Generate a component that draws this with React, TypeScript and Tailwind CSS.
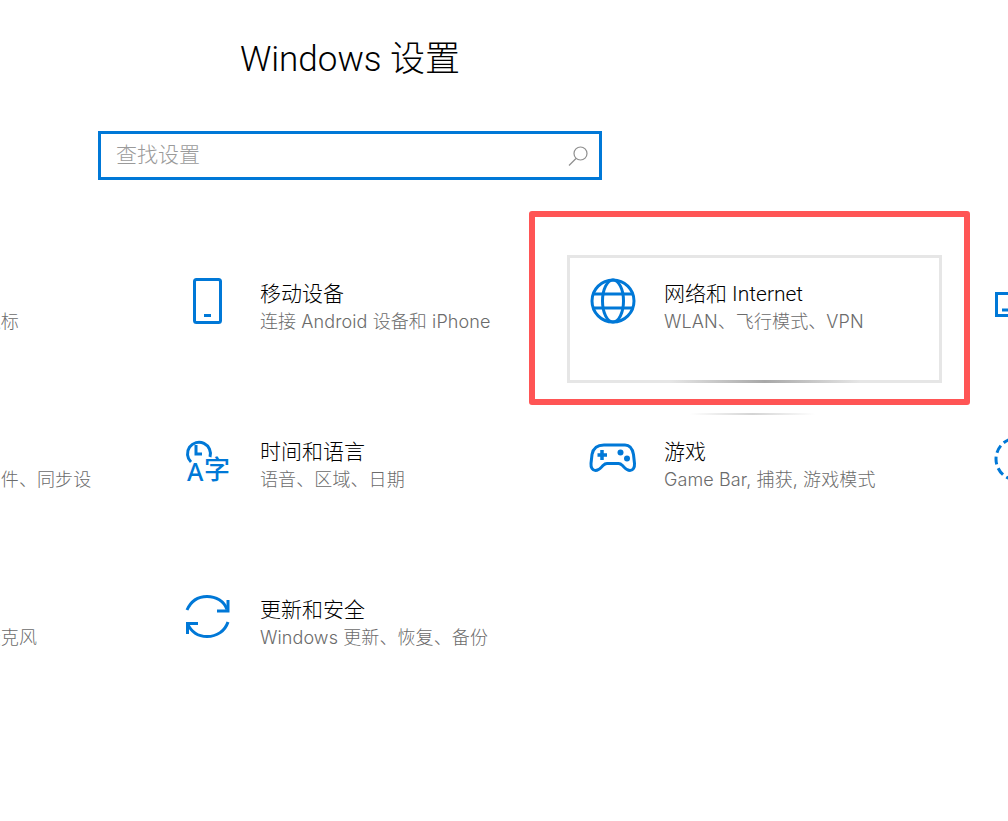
function Globe() {
  return (
    <svg width="48" height="48" viewBox="0 0 48 48" fill="none" stroke="#0078d7" strokeWidth="3">
      <circle cx="24" cy="24" r="21" />
      <ellipse cx="24" cy="24" rx="10.5" ry="21" />
      <path d="M5 17h38M5 31h38" />
    </svg>
  )
}

function Phone() {
  return (
    <svg width="48" height="48" viewBox="0 0 48 48" fill="none" stroke="#0078d7" strokeWidth="3">
      <rect x="9.5" y="2.5" width="26" height="43" rx="2" />
      <path d="M19 38.500h7" />
    </svg>
  )
}

function ClockLang() {
  return (
    <svg width="48" height="48" viewBox="0 0 48 48" fill="none">
      <path d="M6 27a11.500 11.500 0 1 1 19-5" stroke="#0078d7" strokeWidth="3" />
      <path d="M11 10v9h6" stroke="#0078d7" strokeWidth="3" />
      <text x="2" y="46" fontSize="25" fontWeight="500" fill="#0078d7" fontFamily="Noto Sans">A</text>
      <text x="19" y="44" fontSize="26" fontWeight="500" fill="#0078d7" fontFamily="Noto Sans CJK SC">字</text>
    </svg>
  )
}

function Gamepad() {
  return (
    <svg width="48" height="48" viewBox="0 0 48 48" fill="none">
      <path
        d="M13 10h21c5 0 7.500 4 8.500 9.500l1 9c.3 4-1.500 7-4.500 7-4 0-5.500-3-7.500-5-1-1-2-2-4-2H16c-2 0-3 1-4 2-2 2-3.500 5-7.500 5-3 0-4.800-3-4.500-7l1-9C2 14 6 10 13 10z"
        transform="translate(2 0)"
        stroke="#0078d7"
        strokeWidth="3"
      />
      <path d="M13 15v10M8.500 20h9.500" stroke="#0078d7" strokeWidth="3.500" />
      <circle cx="31.500" cy="17.500" r="3" fill="#0078d7" />
      <circle cx="38" cy="23.500" r="3" fill="#0078d7" />
    </svg>
  )
}

function Sync() {
  return (
    <svg width="48" height="48" viewBox="0 0 48 48" fill="none" stroke="#0078d7" strokeWidth="3">
      <path d="M2 17C6 8 13 3.500 22 3.500c9 0 17 4.500 20 13" />
      <path d="M43 7v11H32" />
      <path d="M43 29c-3 9-11 14.500-21 14.500-9 0-16-5-19.500-13" />
      <path d="M2.500 41V30.500H13" />
    </svg>
  )
}

function Personalize() {
  return (
    <svg width="48" height="48" viewBox="0 0 48 48" fill="none" stroke="#0078d7" strokeWidth="3">
      <path d="M3.500 16.500h41v22h-41z" />
      <path d="M9 33h30" />
    </svg>
  )
}

function Ease() {
  return (
    <svg width="48" height="48" viewBox="0 0 48 48" fill="none" stroke="#0078d7" strokeWidth="3">
      <circle cx="24" cy="24" r="21" strokeDasharray="8 4" />
    </svg>
  )
}

const items = [
  { title: '设备', sub: '蓝牙、打印机、鼠标' },
  { title: '移动设备', sub: '连接 Android 设备和 iPhone', icon: Phone },
  { title: '网络和 Internet', sub: 'WLAN、飞行模式、VPN', icon: Globe, active: true },
  { title: '个性化', sub: '背景、锁屏、颜色', icon: Personalize },
  { title: '帐户', sub: '你的帐户、电子邮件、同步设' },
  { title: '时间和语言', sub: '语音、区域、日期', icon: ClockLang },
  { title: '游戏', sub: 'Game Bar, 捕获, 游戏模式', icon: Gamepad },
  { title: '轻松使用', sub: '讲述人、放大镜、高对比度', icon: Ease },
  { title: '隐私', sub: '位置、摄像头、麦克风' },
  { title: '更新和安全', sub: 'Windows 更新、恢复、备份', icon: Sync },
]

export default function App() {
  return (
    <div className='relative w-[1008px] h-[821px] overflow-hidden bg-white font-["Roboto","Noto_Sans_CJK_SC",sans-serif]'>
      {/* Header */}
      <div className="w-[504px] ml-[98px] pt-[35px] flex flex-col items-center">
        <h1 className="text-[35px] leading-[50px] font-light text-black">Windows 设置</h1>
        <div className="mt-[46px] w-full h-[49px] border-[3px] border-[#0078d7] flex items-center pl-[15px] pr-[11px]">
          <input
            placeholder="查找设置"
            className="flex-1 min-w-0 text-[21px] font-light outline-none placeholder:text-[#9a9a9a]"
          />
          <svg width="20" height="20" viewBox="0 0 20 20" fill="none" stroke="#8f8f8f" strokeWidth="1.200">
            <circle cx="12.500" cy="7.500" r="6.500" />
            <path d="M8 12.500 1 19.500" />
          </svg>
        </div>
      </div>

      {/* Settings grid */}
      <div className="mt-[75px] ml-[-241px] grid grid-cols-[repeat(4,375px)] auto-rows-[128px] gap-x-[29px] gap-y-[30px]">
        {items.map((item) => (
          <div
            key={item.title}
            className={`flex gap-[27px] pl-[19px] pt-[19px] border-[3px] ${
              item.active ? 'border-[#e6e6e6]' : 'border-transparent'
            }`}
          >
            <div className="w-[48px] h-[48px] shrink-0">{item.icon && <item.icon />}</div>
            <div className="pt-[3px] whitespace-nowrap">
              <div className="text-[21px] leading-[28px] font-light text-black">{item.title}</div>
              <div className='text-[18px] leading-[28px] tracking-[0.1px] text-[#6b6b6b] font-light font-["Inter","Noto_Sans_CJK_SC",sans-serif]'>
                {item.sub}
              </div>
            </div>
          </div>
        ))}
      </div>

      {/* Hover glow under the card */}
      <div className="absolute left-[670px] top-[380px] w-[190px] h-[3px] bg-gradient-to-r from-transparent via-[#a8a8a8] to-transparent" />
      <div className="absolute left-[690px] top-[413px] w-[125px] h-[2px] bg-gradient-to-r from-transparent via-[#d4d4d4] to-transparent" />

      {/* Red annotation box */}
      <div className="absolute left-[529px] top-[211px] w-[441px] h-[194px] border-[6px] border-[#ff5555] rounded-[3px]" />
    </div>
  )
}
